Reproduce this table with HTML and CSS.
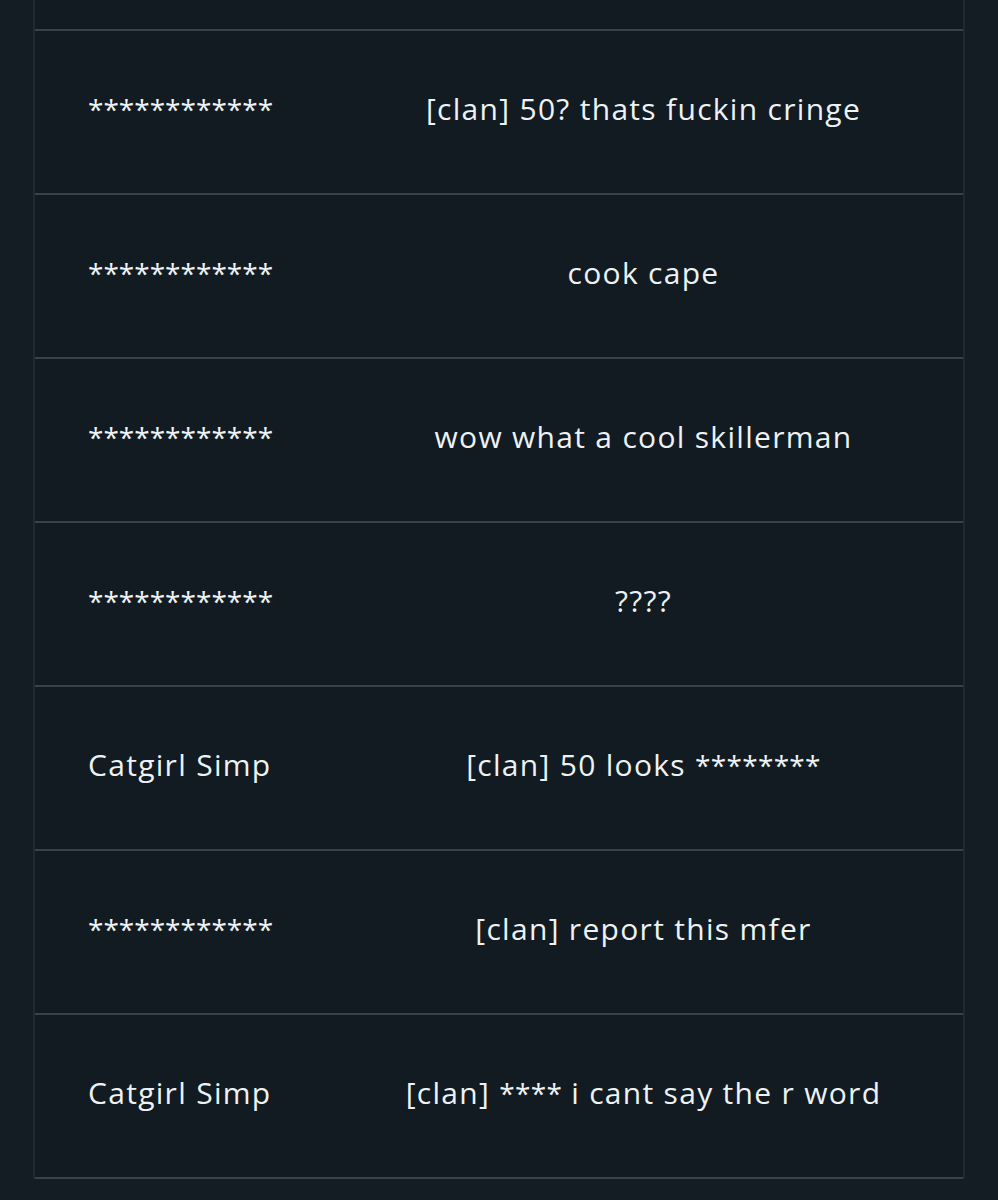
FILE: index.html
```html
<!DOCTYPE html>
<html>
<head>
<meta charset="utf-8">
<link rel="stylesheet" href="styles.css">
</head>
<body>
<div class="panel">
  <div class="row row-top"></div>
  <div class="row"><div class="name masked">************</div><div class="msg">[clan] 50? thats fuckin cringe</div></div>
  <div class="row"><div class="name masked">************</div><div class="msg">cook cape</div></div>
  <div class="row"><div class="name masked">************</div><div class="msg">wow what a cool skillerman</div></div>
  <div class="row"><div class="name masked">************</div><div class="msg">????</div></div>
  <div class="row"><div class="name">Catgirl Simp</div><div class="msg">[clan] 50 looks <span class="stars">********</span></div></div>
  <div class="row"><div class="name masked">************</div><div class="msg">[clan] report this mfer</div></div>
  <div class="row"><div class="name">Catgirl Simp</div><div class="msg">[clan] <span class="stars">****</span> i cant say the r word</div></div>
</div>
</body>
</html>
```

FILE: styles.css
```css
html, body {
  margin: 0;
  padding: 0;
  background: #141d23;
}
body {
  font-family: "Open Sans", Lato, sans-serif;
  color: #eef2f4;
}
.panel {
  margin-left: 33px;
  width: 928px;
  background: #111b21;
  border-left: 2px solid #1d2a32;
  border-right: 2px solid #1d2a32;
}
.row {
  display: grid;
  grid-template-columns: 289px 1fr;
  align-items: center;
  height: 162px;
  border-bottom: 2px solid #37434b;
  font-size: 30px;
  line-height: 36px;
  letter-spacing: 1.3px;
}
.row > div {
  margin-top: -7px;
}
.row-top {
  height: 29px;
}
.name {
  padding-left: 53px;
}
.name.masked {
  font-size: 28px;
  letter-spacing: 0;
}
.stars {
  font-size: 28px;
  letter-spacing: 0.3px;
}
.msg {
  text-align: center;
}
```
